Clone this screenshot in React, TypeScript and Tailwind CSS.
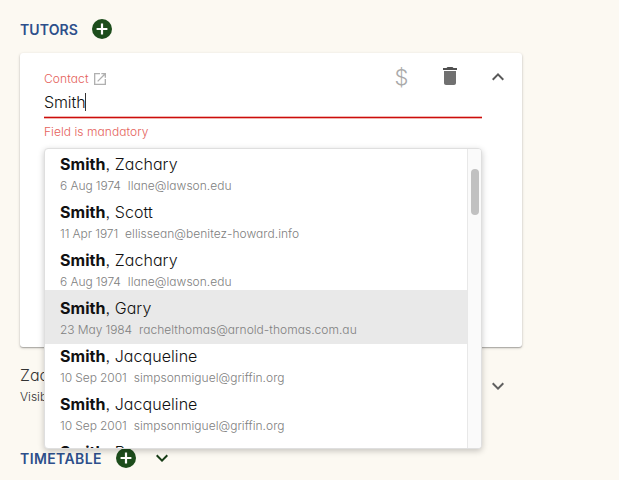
import React from "react";

type Contact = { first: string; date: string; email: string; active?: boolean };

const contacts: Contact[] = [
  { first: "Zachary", date: "6 Aug 1974", email: "llane@lawson.edu" },
  { first: "Scott", date: "11 Apr 1971", email: "ellissean@benitez-howard.info" },
  { first: "Zachary", date: "6 Aug 1974", email: "llane@lawson.edu" },
  { first: "Gary", date: "23 May 1984", email: "rachelthomas@arnold-thomas.com.au", active: true },
  { first: "Jacqueline", date: "10 Sep 2001", email: "simpsonmiguel@griffin.org" },
  { first: "Jacqueline", date: "10 Sep 2001", email: "simpsonmiguel@griffin.org" },
  { first: "Bryan", date: "4 Feb 1989", email: "bryan@griffin.org" },
];

function AddButton() {
  return (
    <button className="flex size-5 items-center justify-center rounded-full bg-[#1d4d1c]" aria-label="Add">
      <svg viewBox="0 0 20 20" className="size-5" fill="none" stroke="#fff" strokeWidth="2.2">
        <path d="M10 4.600v10.800M4.600 10h10.800" />
      </svg>
    </button>
  );
}

function Chevron({ up = false, color }: { up?: boolean; color: string }) {
  return (
    <svg viewBox="0 0 24 24" className="size-6 shrink-0" fill={color}>
      <path d={up ? "M12 8l-6 6 1.41 1.41L12 10.83l4.59 4.58L18 14z" : "M16.59 8.59 12 13.17 7.41 8.59 6 10l6 6 6-6z"} />
    </svg>
  );
}

function ContactOption({ contact }: { contact: Contact }) {
  return (
    <li className={`-mb-1.5 h-[54px] shrink-0 pt-2 pl-[15.5px] whitespace-nowrap ${contact.active ? "bg-[#e9e9e9]" : ""}`}>
      <div className="h-5 text-[16px] leading-5 font-light tracking-[0.06px] text-[#111]">
        <span className="font-bold">Smith</span>, {contact.first}
      </div>
      <div className="mt-[3px] h-[18px] text-[12px] leading-[18px] font-light text-[#808080]">
        <span className="tracking-[-0.08px]">{contact.date}</span>
        <span className="ml-[7px] tracking-[0.03px]">{contact.email}</span>
      </div>
    </li>
  );
}

export default function App() {
  return (
    <main className="h-[480px] w-[619px] overflow-hidden bg-[#fcf9f2] px-5 font-['Inter',sans-serif] [font-feature-settings:'cv11','ss03']">
      <header className="flex h-[53px] items-center gap-[14px] pt-1">
        <h2 className="w-[58px] whitespace-nowrap pt-px text-[14px] font-semibold tracking-[0.1px] text-[#2d4f8b]">TUTORS</h2>
        <AddButton />
      </header>

      <section className="relative h-[294px] w-[502px] rounded-[3px] bg-white shadow-[0_1px_3px_rgba(0,0,0,0.22),0_1px_1px_rgba(0,0,0,0.2)]">
        <div className="flex h-[50px] items-start pl-6">
          <div className="mt-[17px] flex h-[18px] w-[346px] shrink-0 items-center gap-[3px] text-[12px] font-light tracking-[0.1px] text-[#e5625b]">
            <span>Contact</span>
            <svg viewBox="0 0 24 24" className="size-4" fill="#b0b0b0">
              <path d="M19 19H5V5h7V3H3v18h18v-9h-2v7zM14 3v2h3.59l-9.83 9.83 1.41 1.41L19 6.41V10h2V3h-7z" />
            </svg>
          </div>
          <span className="mt-[10px] w-[23px] shrink-0 text-center text-[22px] leading-7 font-light text-[#aaa]">$</span>
          <svg viewBox="0 0 24 24" className="mt-[11px] ml-[25px] size-6 shrink-0" fill="#707070">
            <path d="M6 19c0 1.1.9 2 2 2h8c1.100 0 2-.9 2-2V7H6v12z" />
            <path fill="#505050" d="M19 4h-3.500l-1-1h-5l-1 1H5v2h14V4z" />
          </svg>
          <div className="mt-3 ml-6">
            <Chevron up color="#585858" />
          </div>
        </div>
        <div className="relative -mt-[15px] ml-6 w-[438px]">
          <div className="flex h-[28px] items-center text-[16px] font-light tracking-[-0.1px] text-[#111]">
            <span>Smith</span>
            <span className="-ml-[0.5px] h-[18px] w-px bg-[#333]" />
          </div>
          <div className="h-[3px] border-y border-[#f0b5b0] bg-[#cc0c0c]" />
          <p className="mt-[3px] h-[20px] text-[12px] leading-5 font-light tracking-[0.05px] text-[#e5625b]">Field is mandatory</p>

          <div className="absolute top-[60px] left-[-0.5px] z-10 flex h-[301px] w-[438.5px] overflow-hidden rounded-[4px] border border-[#dfdfdf] bg-white shadow-[0_2px_6px_rgba(0,0,0,0.22)]">
            <ul className="-mt-[3px] flex flex-1 flex-col">
              {contacts.map((contact, index) => (
                <ContactOption key={index} contact={contact} />
              ))}
            </ul>
            <div className="flex w-[14.500px] justify-center border-l border-[#e8e8e8] bg-[#fafafa] pt-5 pl-px">
              <div className="h-[46px] w-2 rounded-full bg-[#c1c1c1]" />
            </div>
          </div>
        </div>
      </section>

      <section className="flex h-[90px] w-[502px] justify-between pt-[18px] pr-3">
        <div className="font-light text-[#333]">
          <div className="text-[16px] leading-5">Zachary</div>
          <div className="mt-[3px] text-[12px] leading-[18px]">Visible</div>
        </div>
        <div className="mt-[9px]">
          <Chevron color="#606060" />
        </div>
      </section>

      <footer className="flex h-[42px] items-center">
        <h2 className="w-[82px] whitespace-nowrap text-[14px] font-semibold tracking-[0.4px] text-[#2d4f8b]">TIMETABLE</h2>
        <div className="ml-[14px]">
          <AddButton />
        </div>
        <div className="ml-[14px]">
          <Chevron color="#173d17" />
        </div>
      </footer>
    </main>
  );
}
